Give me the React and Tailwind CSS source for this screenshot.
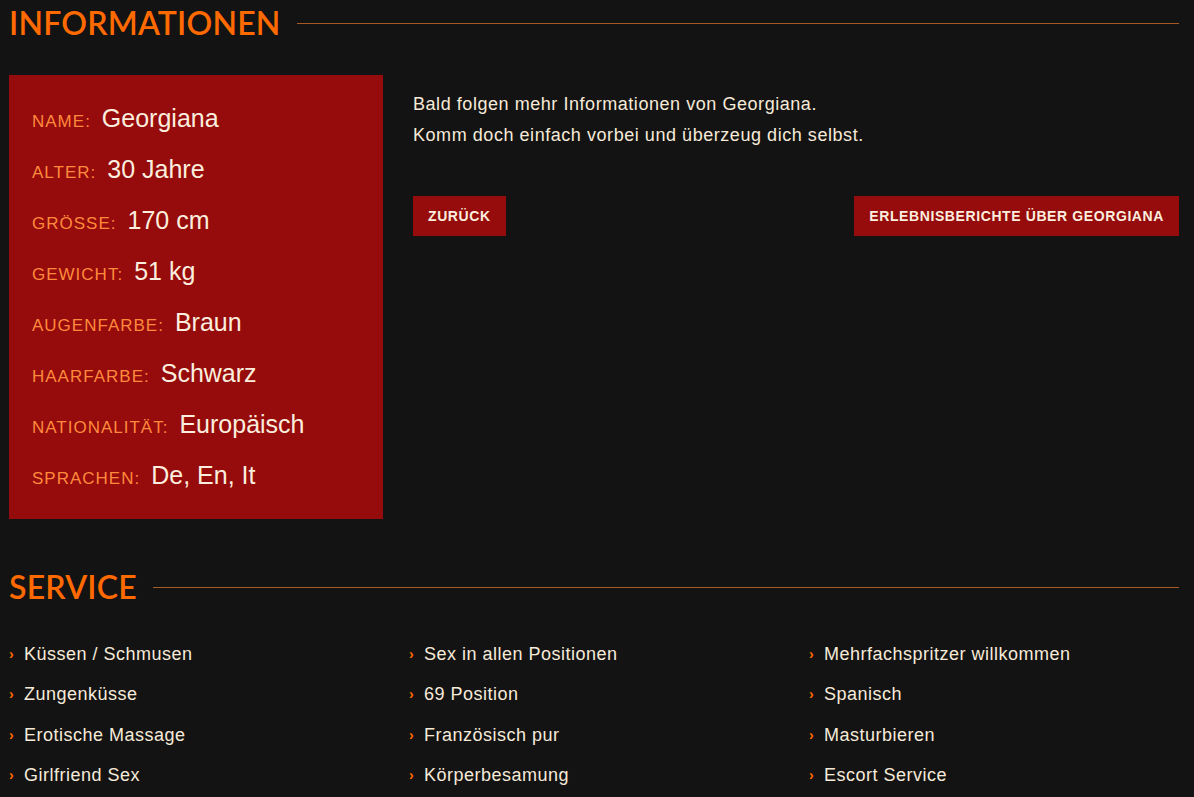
import React from "react";

const details = [
  ["Name", "Georgiana"],
  ["Alter", "30 Jahre"],
  ["Grösse", "170 cm"],
  ["Gewicht", "51 kg"],
  ["Augenfarbe", "Braun"],
  ["Haarfarbe", "Schwarz"],
  ["Nationalität", "Europäisch"],
  ["Sprachen", "De, En, It"],
];

const services = [
  ["Küssen / Schmusen", "Zungenküsse", "Erotische Massage", "Girlfriend Sex"],
  ["Sex in allen Positionen", "69 Position", "Französisch pur", "Körperbesamung"],
  ["Mehrfachspritzer willkommen", "Spanisch", "Masturbieren", "Escort Service"],
];

function SectionTitle({ children }) {
  return (
    <div className="flex items-center gap-4">
      <h2 className="font-['Lato',sans-serif] text-[32px] leading-[44px] font-semibold text-[#ff6a00] tracking-[0.2px] uppercase">
        {children}
      </h2>
      <div className="flex-1 h-px bg-[#a85a24]" />
    </div>
  );
}

export default function App() {
  return (
    <div className="min-h-screen bg-[#131313] text-[#f6ead9] font-['Liberation_Sans',Arial,sans-serif]">
      <div className="w-[1170px] ml-[9px] pt-[1px]">
        <SectionTitle>Informationen</SectionTitle>

        <div className="flex gap-[30px] mt-[30px]">
          <div className="w-[374px] bg-[#960b0b] pl-[23px] pt-[25px] pb-[31px] flex flex-col gap-[20px]">
            {details.map(([label, value]) => (
              <div key={label} className="flex items-baseline h-[31px]">
                <span className="text-[17px] uppercase tracking-[1px] text-[#ff8a3d] mr-[11px]">
                  {label}:
                </span>
                <span className="text-[25px] text-[#fbeede]">{value}</span>
              </div>
            ))}
          </div>

          <div className="flex-1 pt-[14px]">
            <p className="text-[18px] leading-[31px] tracking-[0.55px]">
              Bald folgen mehr Informationen von Georgiana.
              <br />
              Komm doch einfach vorbei und überzeug dich selbst.
            </p>
            <div className="flex justify-between mt-[45px]">
              <button className="h-[40px] px-[15px] bg-[#960b0b] text-[14px] font-bold uppercase tracking-[0.6px] text-[#fbeede]">
                Zurück
              </button>
              <button className="h-[40px] px-[15px] bg-[#960b0b] text-[14px] font-bold uppercase tracking-[0.6px] text-[#fbeede]">
                Erlebnisberichte über Georgiana
              </button>
            </div>
          </div>
        </div>

        <div className="mt-[46px]">
          <SectionTitle>Service</SectionTitle>
        </div>

        <div className="grid grid-cols-[400px_400px_370px] mt-[25px]">
          {services.map((col, i) => (
            <ul key={i} className="flex flex-col">
              {col.map((item) => (
                <li key={item} className="flex items-center h-[40.5px] text-[18px] tracking-[0.5px]">
                  <span className="w-[15px] text-[14px] font-bold text-[#ff6a00]">›</span>
                  <span>{item}</span>
                </li>
              ))}
            </ul>
          ))}
        </div>
      </div>
    </div>
  );
}
